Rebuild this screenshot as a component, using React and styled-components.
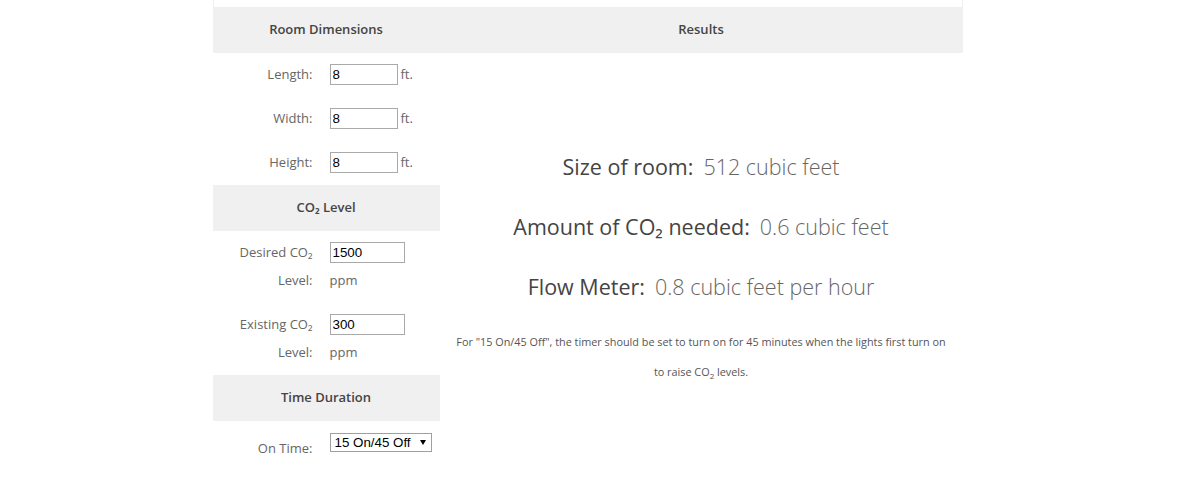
import React from 'react';
import styled, { createGlobalStyle } from 'styled-components';

const GlobalStyle = createGlobalStyle`
  body {
    margin: 0;
    background: #fff;
    font-family: "Open Sans", "Liberation Sans", sans-serif;
    color: #555;
  }
`;

const Frame = styled.div`
  padding-right: 17px;
`;

const Container = styled.div`
  width: 750px;
  margin: 0 auto;
`;

const TopStrip = styled.div`
  height: 7px;
  border-left: 1px solid #eee;
  border-right: 1px solid #eee;
`;

const Table = styled.div`
  display: grid;
  grid-template-columns: 227px 1fr;
`;

const Column = styled.div`
  display: flex;
  flex-direction: column;
`;

const SectionHeader = styled.div`
  height: 46px;
  display: flex;
  align-items: center;
  justify-content: center;
  padding-bottom: 2px;
  box-sizing: border-box;
  background: #f0f0f0;
  font-size: 13px;
  font-weight: 600;
  color: #444;
`;

const Row = styled.div`
  display: grid;
  grid-template-columns: 107px 1fr;
  height: ${p => p.$h || 44}px;
  align-items: ${p => (p.$top ? 'start' : 'center')};
  padding-top: ${p => p.$pt || 0}px;
  padding-bottom: ${p => (p.$top ? 0 : 2)}px;
  box-sizing: border-box;
  font-size: 13px;
  color: #666;
`;

const Label = styled.div`
  text-align: right;
  padding-right: 7px;
  line-height: ${p => p.$lh || 20}px;
  margin-top: ${p => p.$mt || 0}px;
`;

const Field = styled.div`
  padding-left: 10px;
  line-height: 28px;
  white-space: nowrap;
`;

const Unit = styled.span`
  margin-left: 3px;
`;

const UnitLine = styled.div`
  line-height: 28px;
`;

const Input = styled.input`
  box-sizing: border-box;
  vertical-align: top;
  margin-top: 4px;
  width: ${p => p.$w}px;
  height: 21px;
  border: 1px solid #a9a9a9;
  padding: 0 2px;
  font-family: Arial, "Liberation Sans", sans-serif;
  font-size: 13.33px;
  color: #000;
  background: #fff;
  outline: none;
`;

const SelectWrap = styled.div`
  position: relative;
  width: 102px;
  height: 19px;
`;

const Select = styled.select`
  display: block;
  appearance: none;
  box-sizing: border-box;
  width: 100%;
  height: 19px;
  margin: 0;
  border: 1px solid #a0a0a0;
  border-radius: 0;
  padding: 0 0 0 4px;
  font-family: Arial, "Liberation Sans", sans-serif;
  font-size: 13.33px;
  color: #000;
  background: #fff;
`;

const Arrow = styled.svg`
  position: absolute;
  right: 6px;
  top: 7px;
  pointer-events: none;
`;

const ResultsBody = styled.div`
  padding-top: 84px;
  text-align: center;
`;

const ResultLine = styled.div`
  line-height: 60px;
  font-size: 21.5px;
  color: #444;
`;

const Value = styled.span`
  margin-left: 10px;
  font-weight: 300;
  color: #666;
`;

const Note = styled.p`
  margin: 10px 0 0;
  font-size: 10.85px;
  line-height: 30px;
  color: #555;

  sub {
    font-size: 8px;
    line-height: 0;
  }
`;

const fields = [
  { label: 'Length:', value: '8' },
  { label: 'Width:', value: '8' },
  { label: 'Height:', value: '8' },
];

const levels = [
  { label: 'Desired CO₂', value: '1500' },
  { label: 'Existing CO₂', value: '300' },
];

export default function App() {
  return (
    <Frame>
      <GlobalStyle />
      <Container>
        <TopStrip />
        <Table>
          <Column>
            <SectionHeader>Room Dimensions</SectionHeader>
            {fields.map(f => (
              <Row key={f.label}>
                <Label>{f.label}</Label>
                <Field>
                  <Input $w={68} defaultValue={f.value} />
                  <Unit>ft.</Unit>
                </Field>
              </Row>
            ))}
            <SectionHeader>CO₂ Level</SectionHeader>
            {levels.map(l => (
              <Row key={l.label} $h={72} $top $pt={7}>
                <Label $lh={28}>
                  {l.label}
                  <br />
                  Level:
                </Label>
                <Field>
                  <Input $w={75} defaultValue={l.value} />
                  <UnitLine>ppm</UnitLine>
                </Field>
              </Row>
            ))}
            <SectionHeader>Time Duration</SectionHeader>
            <Row $h={61} $top $pt={12}>
              <Label $mt={5}>On Time:</Label>
              <Field>
                <SelectWrap>
                  <Select defaultValue="15">
                    <option value="15">15 On/45 Off</option>
                    <option value="30">30 On/30 Off</option>
                  </Select>
                  <Arrow width="6" height="5" viewBox="0 0 6 5">
                    <path d="M0 0h6L3 5z" fill="#000" />
                  </Arrow>
                </SelectWrap>
              </Field>
            </Row>
          </Column>
          <Column>
            <SectionHeader>Results</SectionHeader>
            <ResultsBody>
              <ResultLine>
                Size of room:<Value>512 cubic feet</Value>
              </ResultLine>
              <ResultLine>
                Amount of CO₂ needed:<Value>0.6 cubic feet</Value>
              </ResultLine>
              <ResultLine>
                Flow Meter:<Value>0.8 cubic feet per hour</Value>
              </ResultLine>
              <Note>
                For "15 On/45 Off", the timer should be set to turn on for 45 minutes when the lights first turn on
                <br />
                to raise CO<sub>2</sub> levels.
              </Note>
            </ResultsBody>
          </Column>
        </Table>
      </Container>
    </Frame>
  );
}
